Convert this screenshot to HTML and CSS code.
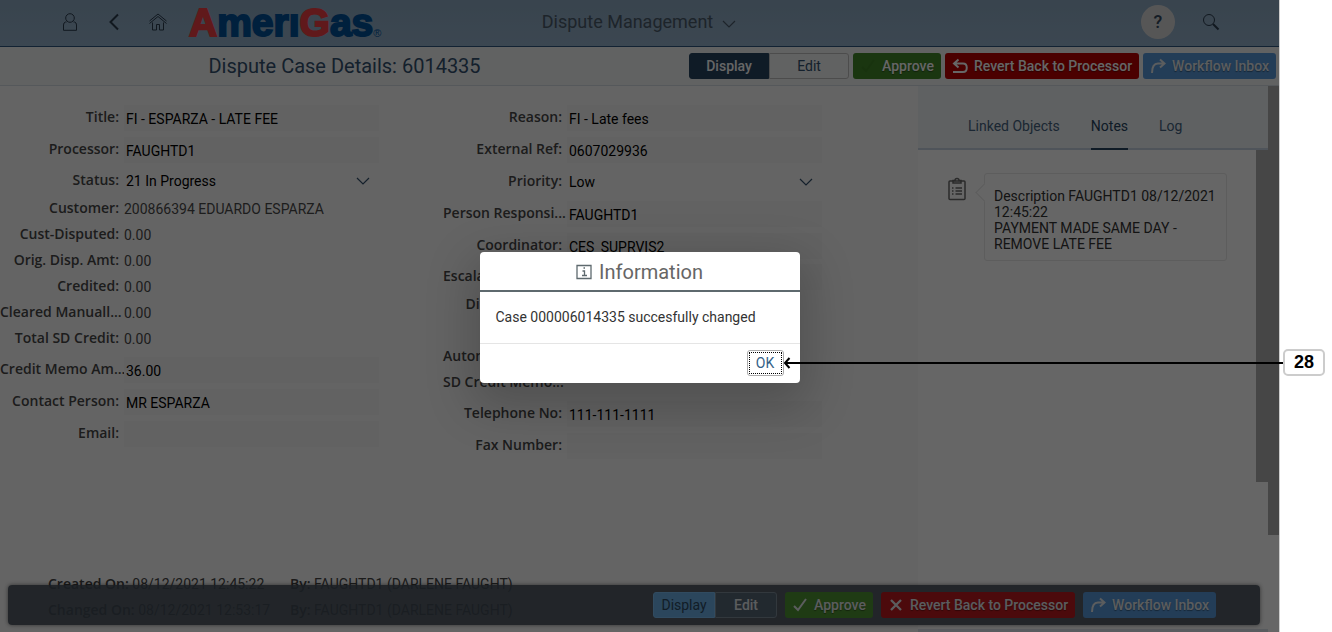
FILE: index.html
```html
<!DOCTYPE html>
<html lang="en">
<head>
<meta charset="utf-8">
<title>Dispute Management</title>
<link rel="stylesheet" href="styles.css">
</head>
<body>
<svg class="defs" aria-hidden="true">
  <symbol id="i-check" viewBox="0 0 16 16"><path d="M2 9l4 4 8-11" fill="none" stroke="currentColor" stroke-width="2"/></symbol>
  <symbol id="i-redo" viewBox="0 0 16 16"><path d="M2 15c0-6 2-9.500 6-9.500h6M10 1.500l4.500 4-4.500 4" fill="none" stroke="currentColor" stroke-width="2"/></symbol>
  <symbol id="i-undo" viewBox="0 0 16 16"><path d="M1 14h10c5 0 5-8.500 0-8.500H2M6.500 1.500l-4.500 4 4.500 4" fill="none" stroke="currentColor" stroke-width="2"/></symbol>
  <symbol id="i-x" viewBox="0 0 16 16"><path d="M3 3l10 10M13 3L3 13" fill="none" stroke="currentColor" stroke-width="2.300"/></symbol>
  <symbol id="i-down" viewBox="0 0 16 16"><path d="M2 5l6 6 6-6" fill="none" stroke="currentColor" stroke-width="1.200"/></symbol>
</svg>
<div class="screen">
  <div class="app">
    <header class="shell">
      <nav class="shell-nav">
        <button class="icon-btn" aria-label="User"><svg viewBox="0 0 20 20"><circle cx="10" cy="6" r="4.300"/><path d="M6.500 10H5.500Q3.500 10.500 3.500 13v5.300h13V13q0-2.500-2-3h-1"/></svg></button>
        <button class="icon-btn" aria-label="Back"><svg viewBox="0 0 20 20"><path class="thick" d="M14 2.500L6.500 10l7.500 7.500"/></svg></button>
        <button class="icon-btn" aria-label="Home"><svg viewBox="0 0 20 20"><path d="M1.500 11.500L10 4.500l8.500 7M1.500 9L10 2l8.500 7M4.500 10.500v7.500h4v-5.500h3V18h4v-7.500"/></svg></button>
        <a class="logo" href="#"><span class="red">A</span>merı<span class="red">G</span>as<sup>®</sup></a>
      </nav>
      <button class="shell-title">Dispute Management <svg><use href="#i-down"/></svg></button>
      <div class="shell-end">
        <button class="help" aria-label="Help">?</button>
        <button class="icon-btn" aria-label="Search"><svg viewBox="0 0 20 20"><circle cx="8" cy="8" r="5.500"/><path class="thick" d="M12 12l5.500 5.500"/></svg></button>
      </div>
    </header>
    <div class="toolbar">
      <h1>Dispute Case Details: 6014335</h1>
      <div class="actions">
        <div class="segmented"><button class="on">Display</button><button>Edit</button></div>
        <button class="btn green ghost"><svg><use href="#i-check"/></svg>Approve</button>
        <button class="btn red-bg"><svg><use href="#i-undo"/></svg>Revert Back to Processor</button>
        <button class="btn blue"><svg><use href="#i-redo"/></svg>Workflow Inbox</button>
      </div>
    </div>
    <div class="content">
      <main class="details">
        <form class="columns">
          <div class="fields">
            <div class="row"><label for="f1">Title:</label><input id="f1" value="FI - ESPARZA - LATE FEE"></div>
            <div class="row"><label for="f2">Processor:</label><input id="f2" value="FAUGHTD1"></div>
            <div class="row short"><label for="f3">Status:</label><span class="select"><select id="f3"><option>21 In Progress</option></select><svg><use href="#i-down"/></svg></span></div>
            <div class="row text"><label for="f4">Customer:</label><output id="f4">200866394 EDUARDO ESPARZA</output></div>
            <div class="row text"><label for="f5">Cust-Disputed:</label><output id="f5">0.00</output></div>
            <div class="row text"><label for="f6">Orig. Disp. Amt:</label><output id="f6">0.00</output></div>
            <div class="row text"><label for="f7">Credited:</label><output id="f7">0.00</output></div>
            <div class="row text"><label class="cut" for="f8">Cleared Manuall...</label><output id="f8">0.00</output></div>
            <div class="row text"><label for="f9">Total SD Credit:</label><output id="f9">0.00</output></div>
            <div class="row spaced"><label class="cut" for="f10">Credit Memo Am...</label><input id="f10" value="36.00"></div>
            <div class="row"><label for="f11">Contact Person:</label><input id="f11" value="MR ESPARZA"></div>
            <div class="row"><label for="f12">Email:</label><input id="f12" value=""></div>
          </div>
          <div class="fields">
            <div class="row"><label for="g1">Reason:</label><input id="g1" value="FI - Late fees"></div>
            <div class="row"><label for="g2">External Ref:</label><input id="g2" value="0607029936"></div>
            <div class="row"><label for="g3">Priority:</label><span class="select"><select id="g3"><option>Low</option></select><svg><use href="#i-down"/></svg></span></div>
            <div class="row"><label class="cut" for="g4">Person Responsi...</label><input id="g4" value="FAUGHTD1"></div>
            <div class="row"><label for="g5">Coordinator:</label><input id="g5" value="CES_SUPRVIS2"></div>
            <div class="row short"><label class="cut" for="g6">Escalation Rea...</label><input id="g6" value=""></div>
            <div class="row text"><label for="g7">Disputed Amt:</label><output id="g7"></output></div>
            <div class="row text"></div>
            <div class="row text"><label class="cut" for="g8">Automatic Chan...</label><output id="g8"></output></div>
            <div class="row text"><label class="cut" for="g9">SD Credit Memo...</label><output id="g9"></output></div>
            <div class="row spaced"><label for="g10">Telephone No:</label><input id="g10" value="111-111-1111"></div>
            <div class="row"><label for="g11">Fax Number:</label><input id="g11" value=""></div>
          </div>
        </form>
        <div class="meta">
          <span><b>Created On:</b> 08/12/2021 12:45:22</span><span><b>By:</b> FAUGHTD1 (DARLENE FAUGHT)</span>
          <span><b>Changed On:</b> 08/12/2021 12:53:17</span><span><b>By:</b> FAUGHTD1 (DARLENE FAUGHT)</span>
        </div>
      </main>
      <aside class="side">
        <nav class="tabs"><a href="#">Linked Objects</a><a class="active" href="#">Notes</a><a href="#">Log</a></nav>
        <div class="notes-wrap">
          <div class="notes">
            <svg class="clip" viewBox="0 0 18 24"><rect x="1" y="4" width="16" height="18.500" rx="1"/><path d="M5 6V3.500h2Q7 1.500 9 1.500t2 2h2V6zM7.500 11H14M7.500 14H14M7.500 17H14M4 11h1.500M4 14h1.500M4 17h1.500"/></svg>
            <p class="bubble">Description FAUGHTD1 08/12/2021 12:45:22<br>PAYMENT MADE SAME DAY - REMOVE LATE FEE</p>
          </div>
          <div class="thumb inner"></div>
        </div>
      </aside>
      <div class="track"><div class="thumb outer"></div></div>
    </div>
    <div class="float-bar">
      <div class="segmented dark"><button class="on">Display</button><button>Edit</button></div>
      <button class="btn green"><svg><use href="#i-check"/></svg>Approve</button>
      <button class="btn red-bg"><svg><use href="#i-x"/></svg>Revert Back to Processor</button>
      <button class="btn blue"><svg><use href="#i-redo"/></svg>Workflow Inbox</button>
    </div>
    <div class="overlay">
      <section class="dialog" role="dialog" aria-labelledby="dlg">
        <h2 id="dlg"><svg viewBox="0 0 16 16"><path d="M1 1.500h14v13H1zM6.500 7H8.500v4.500M6 11.500h5M7.500 4h1.500"/></svg>Information</h2>
        <p>Case 000006014335 succesfully changed</p>
        <footer><button class="ok">OK</button></footer>
      </section>
    </div>
  </div>
  <div class="callout"><svg viewBox="0 0 8 12"><path d="M6.500 1L2 6l4.500 5"/></svg><span class="line"></span><span class="badge">28</span></div>
</div>
</body>
</html>
```

FILE: styles.css
```css
* { box-sizing: border-box; }
body { margin: 0; background: #fff; font: 14px/16px Roboto, "Liberation Sans", sans-serif; }
button, input, select { font: inherit; color: inherit; margin: 0; padding: 0; border: 0; background: none; }
a { color: inherit; text-decoration: none; }
h1, h2, p { margin: 0; font-weight: 400; }
.defs { position: absolute; width: 0; height: 0; }

.screen { position: relative; min-height: 100vh; padding-right: 52px; display: flex; }
.app { position: relative; flex: 1; display: flex; flex-direction: column; border-right: 1px solid #ccc; overflow: hidden; }

.shell { height: 47px; display: grid; grid-template-columns: 1fr auto 1fr; align-items: center; background: linear-gradient(#8eaac2, #95b1cb); border-bottom: 1px solid #2f5580; color: #354a5f; padding-bottom: 2px; }
.shell-nav { display: flex; align-items: center; gap: 24px; padding-left: 60px; }
.icon-btn { width: 20px; height: 20px; }
.icon-btn svg { display: block; width: 20px; height: 20px; fill: none; stroke: #2b3d4f; stroke-width: 1; }
.icon-btn .thick { stroke-width: 2; }
.logo { display: flex; align-items: flex-end; margin-left: -3px; padding-top: 2px; font: 700 39px/40px "Liberation Sans", sans-serif; color: #005099; -webkit-text-stroke: 2px currentColor; }
.logo .red { color: #f04045; }
.logo sup { font-size: 11px; line-height: 20px; font-weight: 400; -webkit-text-stroke: 0; }
.shell-title { display: flex; align-items: center; gap: 8px; font-size: 18px; line-height: 24px; color: #4a5a6a; }
.shell-title svg { width: 16px; height: 16px; margin-top: 4px; }
.shell-end { display: flex; justify-content: flex-end; align-items: center; gap: 26px; padding-right: 58px; }
.help { width: 34px; height: 34px; border-radius: 50%; background: #d8d8d8; font-size: 18px; font-weight: 500; }

.toolbar { height: 39px; display: flex; align-items: center; background: #f3f4f5; border-bottom: 1px solid #d5dbe3; padding-right: 3px; }
.toolbar h1 { flex: 1; text-align: center; font-size: 20px; line-height: 24px; color: #32506f; }
.actions { display: flex; gap: 4px; }
.segmented { display: flex; height: 26px; color: #32506f; }
.segmented button { width: 80px; border: 1px solid #bfbfbf; border-radius: 0 3px 3px 0; }
.segmented .on { background: #264460; border-color: #264460; color: #fff; border-radius: 3px 0 0 3px; font-weight: 500; }
.btn { display: flex; align-items: center; justify-content: space-between; height: 26px; padding: 0 7px; border-radius: 3px; color: #fff; font-weight: 500; text-shadow: 0 1px 1px rgba(0,0,0,.4); }
.btn svg { width: 16px; height: 16px; margin-right: 6px; }
.green { background: #42872a; }
.ghost svg { color: #3d8025; }
.red-bg { background: #bb0000; }
.blue { background: #5899da; }
.blue, .float-bar .btn { color: #e4e8ec; }

.content { flex: 1; display: flex; }
.details { flex: 1; display: flex; flex-direction: column; background: #fafafa; padding: 16px 0 9px; }
.columns { display: grid; grid-template-columns: 379px 379px; column-gap: 64px; }
.row { display: grid; grid-template-columns: 124px 1fr; align-items: center; height: 32px; }
.row.short { height: 30px; }
.row.text { height: 26px; }
.row.spaced { margin-top: 2px; }
.row label { padding: 0 5px 2px 0; text-align: right; font-family: "Open Sans", Roboto, sans-serif; font-weight: 600; line-height: 20px; color: #484848; white-space: nowrap; }
.row label.cut { padding-right: 0; text-align: left; }
.row input { width: 100%; height: 26px; padding: 1px 2px 0; background: #f5f5f5; color: #000; }
.row output { color: #4a4a4a; }
.select { display: flex; align-items: center; padding: 0 8px 0 2px; color: #000; }
.select select { flex: 1; appearance: none; }
.select svg { width: 16px; height: 16px; color: #34506c; }
.meta { display: grid; grid-template-columns: 242px auto; justify-content: start; margin-top: auto; padding-left: 48px; line-height: 25px; color: #444; }
.meta b { font-family: "Open Sans", Roboto, sans-serif; font-weight: 600; }

.side { width: 350px; display: flex; flex-direction: column; background: #fff; border-bottom: 3px solid #dde3ec; }
.tabs { height: 64px; display: flex; align-items: flex-end; gap: 31px; padding-left: 50px; background: #eef2f5; border-bottom: 2px solid #c5d2e0; color: #45627f; }
.tabs a { padding-bottom: 14px; margin-bottom: -2px; border-bottom: 2px solid transparent; }
.tabs .active { border-color: #264460; color: #264460; }
.notes-wrap { flex: 1; display: flex; }
.notes { flex: 1; display: flex; align-items: flex-start; gap: 18px; padding: 23px 29px 0 30px; }
.clip { flex: none; width: 18px; height: 24px; margin-top: 4px; fill: none; stroke: #6a6a6a; stroke-width: 1.5; }
.bubble { position: relative; flex: 1; padding: 14px 9px 8px; border: 1px solid #e8e8e8; border-radius: 3px; color: #333; }
.bubble::before { content: ""; position: absolute; left: -7px; top: 12px; width: 12px; height: 12px; background: #fff; border: solid #e8e8e8; border-width: 0 0 1px 1px; transform: rotate(45deg); }
.thumb { background: #aeaeae; }
.inner { width: 12px; height: 332px; }
.track { width: 11px; background: #fff; }
.outer { height: 449px; }

.float-bar { position: absolute; left: 8px; right: 19px; bottom: 7px; height: 40px; display: flex; align-items: center; justify-content: flex-end; gap: 8px; padding-right: 44px; border-radius: 4px; background: rgba(66,76,88,.9); box-shadow: 0 0 4px rgba(0,0,0,.5); }
.dark { color: #e4e8ec; }
.dark button { width: 62px; background: #566676; border-color: #7d8c9a; font-weight: 500; }
.dark .on { background: #6bb0e6; border-color: #7cbcf0; color: #2e4a62; font-weight: 400; }
.float-bar .green { background: #4f9433; }
.float-bar .red-bg { background: #be1a1f; }

.overlay { position: absolute; inset: 0; display: flex; align-items: center; justify-content: center; padding-top: 3px; background: rgba(0,0,0,.6); }
.dialog { width: 320px; border-radius: 4px; background: #fff; box-shadow: 0 16px 48px 8px rgba(0,0,0,.2); }
.dialog h2 { display: flex; align-items: center; justify-content: center; gap: 7px; height: 40px; padding-top: 2px; border-bottom: 2px solid #5e696e; font-size: 20px; color: #666; }
.dialog h2 svg { width: 16px; height: 16px; fill: none; stroke: #5e696e; stroke-width: 1.3; }
.dialog p { padding: 17px 16px 18px; color: #333; }
.dialog footer { height: 40px; display: flex; justify-content: flex-end; align-items: center; padding: 0 16px 2px 0; border-top: 1px solid #e5e5e5; }
.ok { width: 37px; height: 26px; border: 1px solid #ababab; border-radius: 3px; outline: 1px dotted #000; outline-offset: -3px; color: #346187; }

.callout { position: absolute; left: calc(50% + 117px); right: 7px; top: calc(50% + 33px); display: flex; align-items: center; }
.callout svg { width: 8px; height: 12px; fill: none; stroke: #000; stroke-width: 2; }
.line { flex: 1; height: 2px; margin-left: -6px; background: #000; }
.badge { width: 42px; height: 27px; border: 2px solid #ccc; border-radius: 5px; background: #fff; text-align: center; font: 700 18px/23px "Liberation Sans", sans-serif; }
```
